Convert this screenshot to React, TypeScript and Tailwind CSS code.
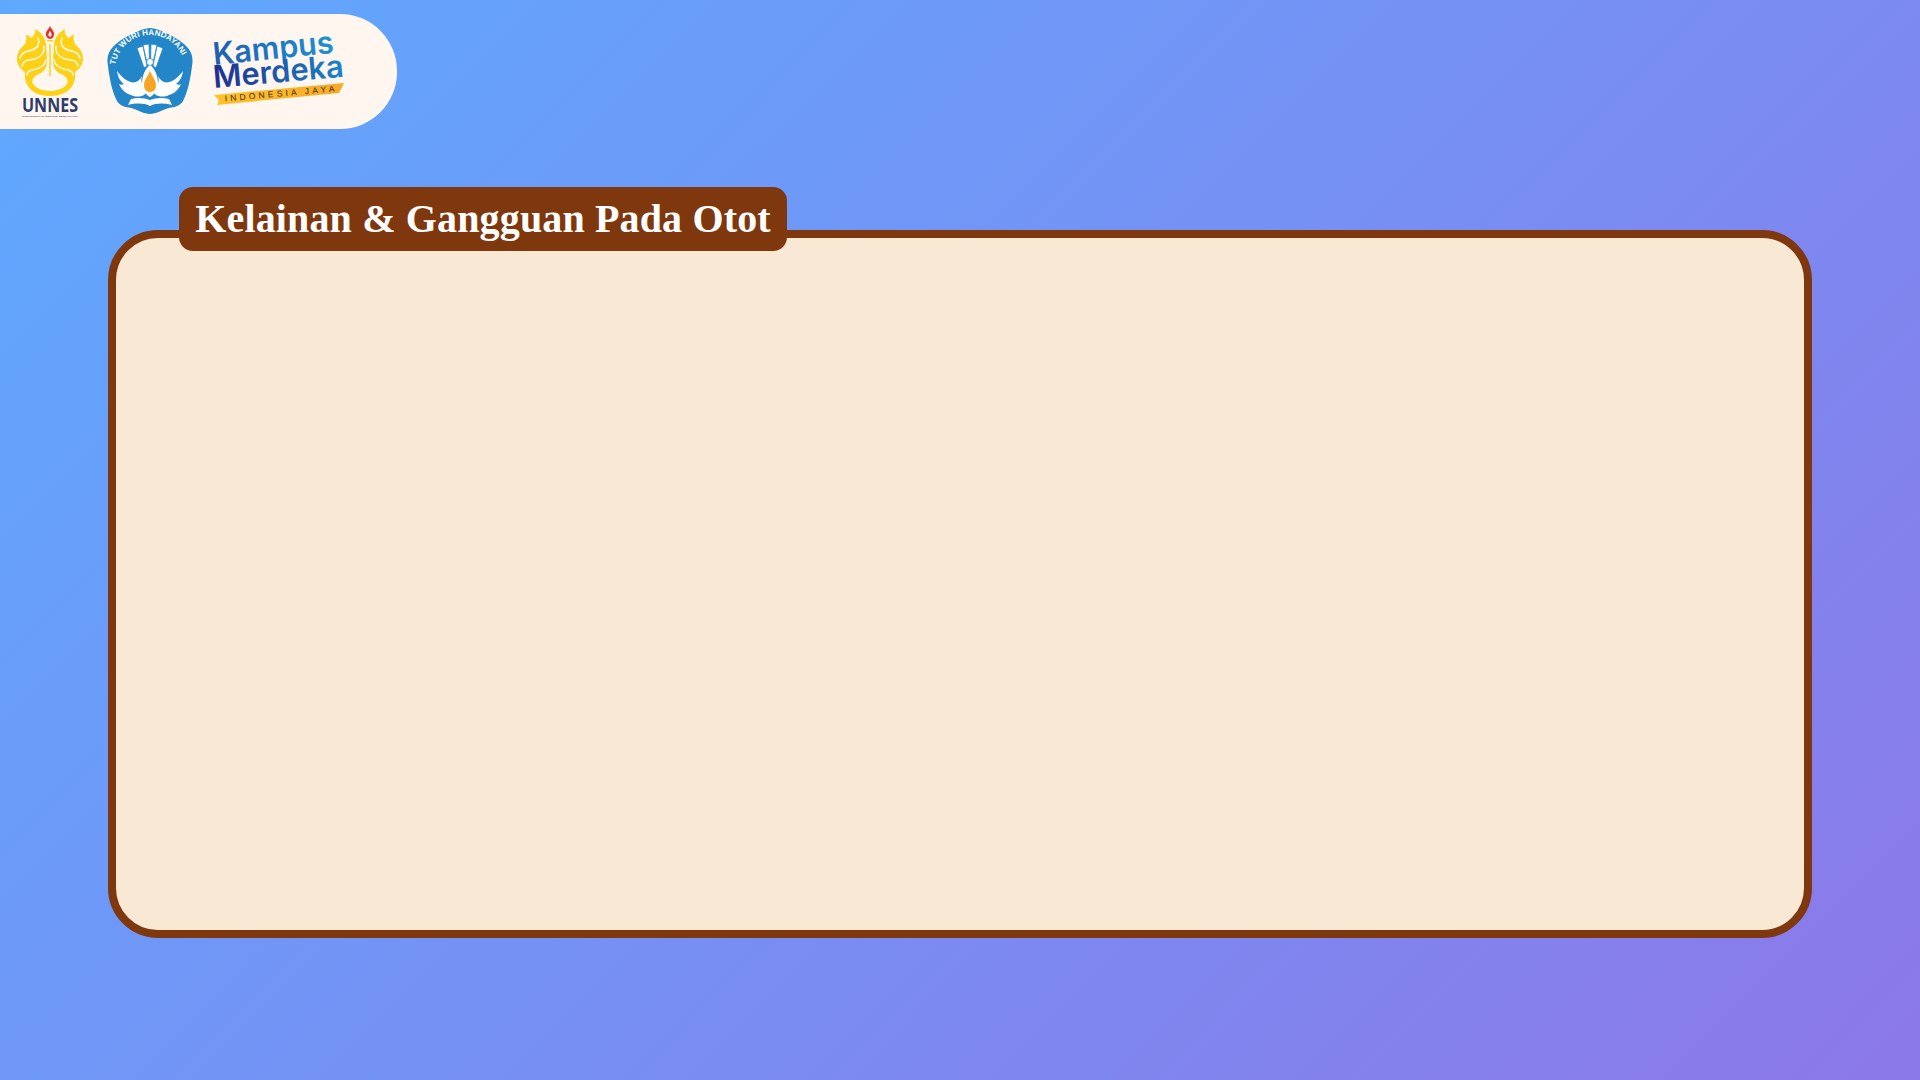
import React from 'react';

const UnnesLogo = () => {
  const wing = (
    <g>
      <path d="M46 44 C45 37 41 32 35 29 C36 33 34 36 31 38 C29 36 28 35 26 35 C27 40 26 44 22 47 C19 50 17 54 17 59 C17 64 20 69 25 72 C24 80 27 88 34 92 C39 95 45 96 50 96 L50 91 C44 91 37 89 33 84 C31 80 34 76 39 74 C44 72 47 68 47 60Z" fill="#fdd116" />
      <g fill="none" stroke="#fff7ef" strokeWidth="1.500" strokeLinecap="round">
        <path d="M44 46 C45 55 38 59 30 60 C26 60 23 62 22 66" />
        <path d="M38 38 C41 46 35 50 28 51 C24 52 21 54 20 58" />
        <path d="M46 60 C45 67 38 69 32 70 C29 71 27 72 27 75" />
      </g>
    </g>
  );
  return (
    <svg width="68" height="93" viewBox="16 25 68 93" className="shrink-0 overflow-visible">
      {wing}
      <g transform="translate(100 0) scale(-1 1)">{wing}</g>
      <path d="M50 44 L50 76" stroke="#fdd116" strokeWidth="1.500" />
      <path d="M50 26 C52 30 55 32 54 35 C53.500 38 51 39 50 39 C49 39 46.500 38 46 35 C45 32 48 30 50 26Z" fill="#e2332d" />
      <path d="M50 31 C51 33 52 34 51.500 35.500 C51 37 49 37 48.500 35.500 C48 34 49 33 50 31Z" fill="#fff7ef" />
      <rect x="47" y="40" width="6" height="1.500" fill="#fdd116" />
      <text x="50" y="112" textAnchor="middle" fontFamily="'Open Sans', sans-serif" fontWeight="700" fontSize="19.500" textLength="56" lengthAdjust="spacingAndGlyphs" fill="#2f3d6b">UNNES</text>
      <text x="50" y="116.500" textAnchor="middle" fontFamily="'Liberation Sans', sans-serif" fontWeight="700" fontSize="2" textLength="56" lengthAdjust="spacingAndGlyphs" fill="#5d6480">UNIVERSITAS NEGERI SEMARANG</text>
    </svg>
  );
};

const TutWuriLogo = () => {
  const wing = (
    <path d="M117 71 C118 78 121 82 124 84 C122 85 120 85 119 84 C122 91 127 94 131 95 C135 97 140 97 144 95 C147 93 146 89 143 85 C141 82 141 79 142 76 C139 82 134 84 128 81 C124 79 120 75 117 71Z" fill="#fff" />
  );
  return (
    <svg width="86" height="87" viewBox="107 28 86 87" className="shrink-0 overflow-visible">
      <path d="M150 28 C158 28 176 37 184 44 C190 49 193 55 192.500 62 C191 76 188 92 183 101 C180 106 175 107 169 108 C162 110 156 114 150 114 C144 114 138 110 131 108 C125 107 120 106 117 101 C112 92 109 76 107.500 62 C107 55 110 49 116 44 C124 37 142 28 150 28Z" fill="#2386c8" />
      <defs>
        <path id="tutWuriArc" d="M115 66 C118 46 134 35 150 35 C166 35 182 46 185 66" />
      </defs>
      <text fontFamily="'Liberation Sans', sans-serif" fontSize="8" fontWeight="700" fill="#fff">
        <textPath href="#tutWuriArc" startOffset="1" textLength="90">TUT WURI HANDAYANI</textPath>
      </text>
      <g fill="#fff" stroke="#2386c8" strokeWidth="0.800">
        <path d="M137 48 L143 46 L147 66 L144 68Z" />
        <path d="M163 48 L157 46 L153 66 L156 68Z" />
        <path d="M143 45 L149 44 L149.500 63 L147 63Z" />
        <path d="M157 45 L151 44 L150.500 63 L153 63Z" />
      </g>
      <circle cx="150" cy="62" r="3.500" fill="#fff" stroke="#2386c8" strokeWidth="0.800" />
      <path d="M150 65 C154 68 158 74 158 84 C158 91 154 95 150 97 C146 95 142 91 142 84 C142 74 146 68 150 65Z" fill="#fff" />
      {wing}
      <g transform="translate(300 0) scale(-1 1)">{wing}</g>
      <path d="M150 71 C152 76 156 80 156 85 C156 90 153 92 150 92 C147 92 144 90 144 85 C144 80 148 76 150 71Z" fill="#f6a623" />
      <path d="M131 99 C138 97 145 98 150 100 C155 98 162 97 169 99 L172 105 C164 103 156 103 150 106 C144 103 136 103 128 105Z" fill="#fff" />
    </svg>
  );
};

const KampusLogo = () => (
  <svg width="134" height="75" viewBox="212 34 134 75" className="shrink-0 overflow-visible">
    <defs>
      <linearGradient id="kampusFill" gradientUnits="userSpaceOnUse" x1="0" x2="121" y1="0" y2="0">
        <stop offset="0" stopColor="#1f5fb0" />
        <stop offset="1" stopColor="#1c92d2" />
      </linearGradient>
      <linearGradient id="merdekaFill" gradientUnits="userSpaceOnUse" x1="0" x2="131" y1="0" y2="0">
        <stop offset="0" stopColor="#1f2f8f" />
        <stop offset="1" stopColor="#1a86c8" />
      </linearGradient>
      <linearGradient id="bannerFill" x1="0" x2="1" y1="0" y2="0">
        <stop offset="0" stopColor="#fdc32d" />
        <stop offset="1" stopColor="#f7a928" />
      </linearGradient>
    </defs>
    <text transform="translate(214 65) rotate(-5.800)" fontFamily="Inter, sans-serif" fontWeight="600" fontSize="31" textLength="121" lengthAdjust="spacingAndGlyphs" fill="url(#kampusFill)">Kampus</text>
    <text transform="translate(214 88) rotate(-5)" fontFamily="Inter, sans-serif" fontWeight="600" fontSize="31" textLength="131" lengthAdjust="spacingAndGlyphs" fill="url(#merdekaFill)">Merdeka</text>
    <path d="M214 95 L344 83 L339 93 L217 105 L219 100Z" fill="url(#bannerFill)" />
    <text transform="translate(225 101.500) rotate(-5.200)" fontFamily="'Liberation Sans', sans-serif" fontSize="8.500" textLength="110" fill="#3a2a12">INDONESIA JAYA</text>
  </svg>
);

const App: React.FC = () => {
  return (
    <div className="h-[1080px] w-full overflow-hidden bg-[linear-gradient(135deg,#5ea9ff,#8c78e8)] pt-[14px]">
      {/* Logo strip */}
      <div className="flex h-[115px] w-[397px] items-center rounded-r-[57px] bg-[#fff7ef] pl-[16px]">
        <UnnesLogo />
        <div className="ml-[23px]"><TutWuriLogo /></div>
        <div className="ml-[19px]"><KampusLogo /></div>
      </div>

      {/* Main card */}
      <div className="ml-[108px] mt-[101px] h-[708px] w-[1704px] rounded-[50px] border-[8px] border-[#7f370e] bg-[#f9e8d4]">
        <div className="ml-[63px] mt-[-51px] flex h-[64px] w-[608px] items-center justify-center rounded-[14px] bg-[#7f370e]">
          <h1 className="font-['Liberation_Serif',serif] text-[40px] font-bold tracking-[0.15px] whitespace-nowrap text-white">
            Kelainan &amp; Gangguan Pada Otot
          </h1>
        </div>
      </div>
    </div>
  );
};

export default App;
